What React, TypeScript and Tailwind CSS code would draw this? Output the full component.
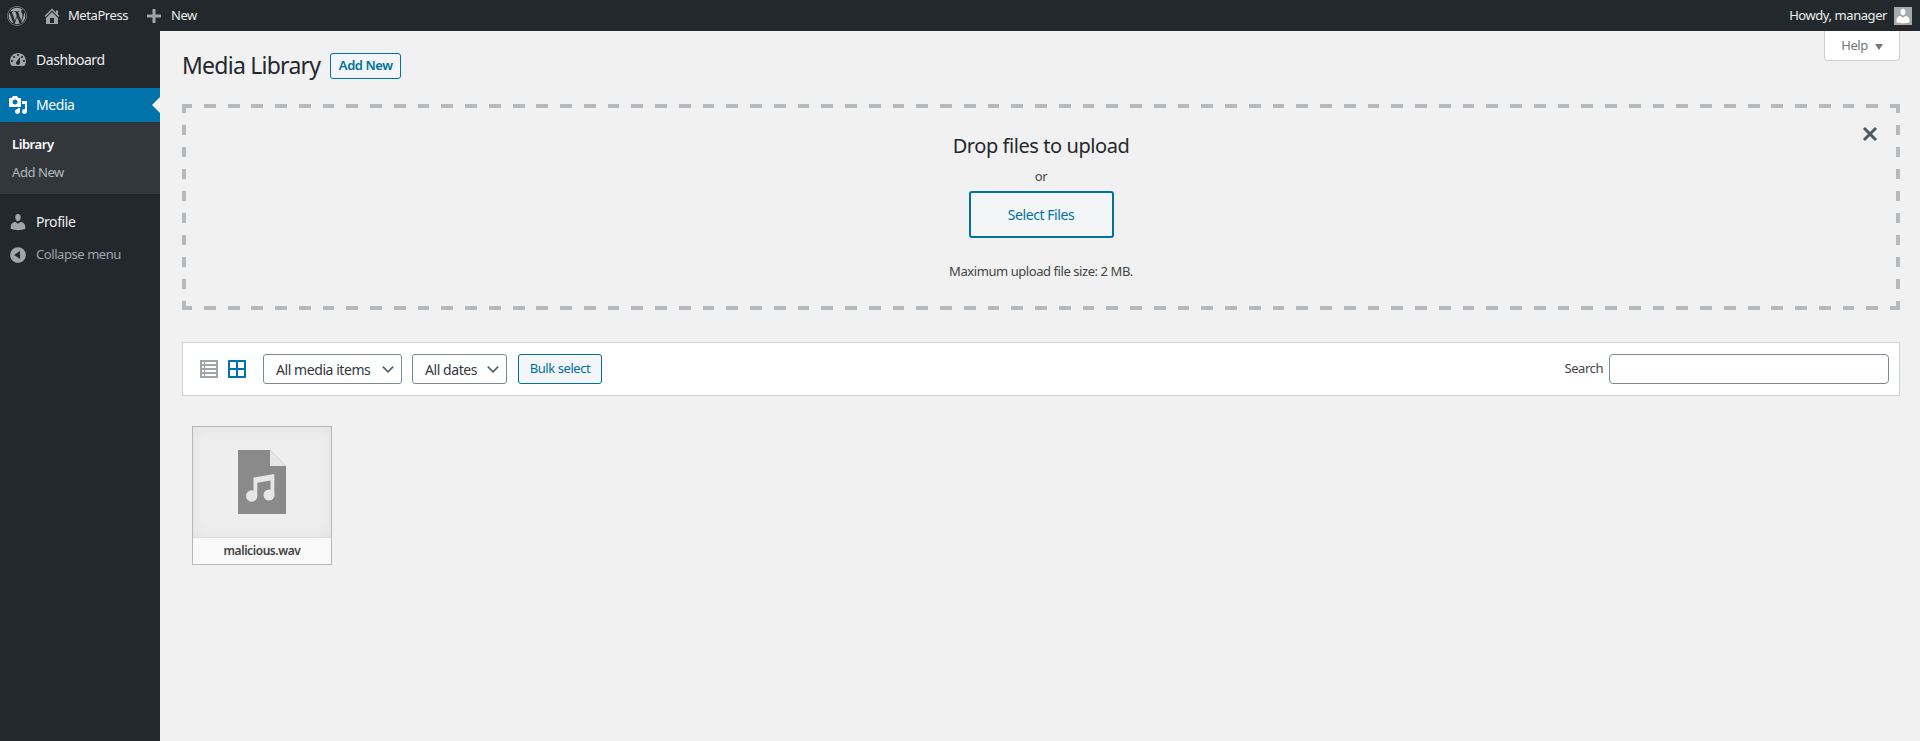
import { ReactNode } from "react";
import { FaWordpress } from "react-icons/fa";

const FONT = "font-['Noto_Sans','Open_Sans',sans-serif] tracking-[-0.027em]";

const Dashicon = ({ d, className }: { d: string; className: string }) => (
  <svg viewBox="0 0 20 20" fill="currentColor" className={className}>
    <path d={d} fillRule="evenodd" />
  </svg>
);

const ICONS = {
  home: "M16 8.5l1.53 1.53-1.06 1.06L10 4.62l-6.47 6.47-1.06-1.06L10 2.5l4 4v-2h2v4zm-6-2.46l6 5.99V18H4v-5.97zM12 17v-5H8v5h4z",
  plus: "M17 8.5v3h-5.5V17h-3v-5.5H3v-3h5.5V3h3v5.5z",
  dashboard:
    "M3.76 16h12.48c1.1-1.37 1.76-3.11 1.76-5 0-4.42-3.58-8-8-8s-8 3.58-8 8c0 1.89.66 3.63 1.76 5zM10 4c.55 0 1 .45 1 1s-.45 1-1 1-1-.45-1-1 .45-1 1-1zM6 6c.55 0 1 .45 1 1s-.45 1-1 1-1-.45-1-1 .45-1 1-1zm8 0c.55 0 1 .45 1 1s-.45 1-1 1-1-.45-1-1 .45-1 1-1zm-5.37 5.55L12 7v6c0 1.1-.9 2-2 2s-2-.9-2-2c0-.57.24-1.08.63-1.45zM4 10c.55 0 1 .45 1 1s-.45 1-1 1-1-.45-1-1 .45-1 1-1zm12 0c.55 0 1 .45 1 1s-.45 1-1 1-1-.45-1-1 .45-1 1-1z",
  media:
    "M13 11V4c0-.55-.45-1-1-1h-1.67L9 1H5L3.67 3H2c-.55 0-1 .45-1 1v7c0 .55.45 1 1 1h10c.55 0 1-.45 1-1zM7 4.5c1.38 0 2.5 1.12 2.5 2.5S8.38 9.5 7 9.5 4.5 8.38 4.5 7 5.62 4.5 7 4.5zM14 6h5v10.5c0 1.38-1.12 2.5-2.5 2.5S14 17.88 14 16.5s1.12-2.5 2.5-2.5c.17 0 .34.02.5.05V9h-3V6zm-4 8.05V13h2v3.5c0 1.38-1.12 2.5-2.5 2.5S7 17.88 7 16.5 8.12 14 9.5 14c.17 0 .34.02.5.05z",
  profile:
    "M10 9.25c-2.27 0-2.73-3.44-2.73-3.44C7 4.02 7.82 2 9.97 2c2.16 0 2.98 2.02 2.71 3.81 0 0-.41 3.44-2.68 3.44zm0 2.57L12.72 10c2.39 0 4.52 2.33 4.52 4.53v2.49s-3.65 1.13-7.24 1.13c-3.65 0-7.24-1.13-7.24-1.13v-2.49c0-2.25 1.94-4.48 4.47-4.48z",
  collapse:
    "M10 2.16c4.33 0 7.84 3.51 7.84 7.84s-3.51 7.84-7.84 7.84S2.16 14.33 2.16 10 5.71 2.16 10 2.16zm2 11.72V6.12L6.18 9.97z",
  grid: "M2 1h16c.55 0 1 .45 1 1v16c0 .55-.45 1-1 1H2c-.55 0-1-.45-1-1V2c0-.55.45-1 1-1zm7.01 7.99v-6H3v6h6.01zm8 0v-6h-6v6h6zm-8 8.01v-6H3v6h6.01zm8 0v-6h-6v6h6z",
  list: "M1 1h18v18H1zM3 3v2h2V3zm3 0v2h11V3zM3 7v2h2V7zm3 0v2h11V7zM3 11v2h2v-2zm3 0v2h11v-2zM3 15v2h2v-2zm3 0v2h11v-2z",
};

const MenuItem = ({ icon, children }: { icon: string; children: ReactNode }) => (
  <a className="flex h-[34px] items-center text-[14px] text-[#eeeeee]">
    <span className="flex w-[36px] justify-center text-[#a0a5aa]">
      <Dashicon d={icon} className="h-5 w-5" />
    </span>
    <span className="pb-[2px]">{children}</span>
  </a>
);

const Select = ({ label, className }: { label: string; className: string }) => (
  <div
    className={`flex h-[30px] items-center justify-between whitespace-nowrap rounded-[3px] border border-[#7e8993] bg-white pl-[12px] pr-[5px] text-[14px] text-[#32373c] ${className}`}
  >
    {label}
    <svg viewBox="0 0 20 20" className="h-4 w-4" fill="none" stroke="#555d66" strokeWidth="2">
      <path d="M3.5 7l6.5 6.5L16.5 7" />
    </svg>
  </div>
);

export default function App() {
  return (
    <div className={`flex min-h-screen flex-col bg-[#f1f1f1] ${FONT}`}>
      <header className="flex h-[31px] items-center justify-between bg-[#23282d] text-[13px] text-[#eeeeee]">
        <div className="flex items-center">
          <FaWordpress className="ml-[7px] h-[20px] w-[20px] text-[#a0a5aa]" />
          <Dashicon d={ICONS.home} className="ml-[15px] h-5 w-5 text-[#a0a5aa]" />
          <span className="ml-[6px]">MetaPress</span>
          <Dashicon d={ICONS.plus} className="ml-[16px] h-5 w-5 text-[#a0a5aa]" />
          <span className="ml-[7px]">New</span>
        </div>
        <div className="mr-[8px] flex items-center gap-[7px]">
          <span>Howdy, manager</span>
          <span className="flex h-[18px] w-[18px] items-end justify-center overflow-hidden bg-[#a7aaad]">
            <Dashicon d={ICONS.profile} className="h-[18px] w-[18px] text-white" />
          </span>
        </div>
      </header>

      <div className="flex flex-1">
        <aside className="w-[160px] shrink-0 bg-[#23282d] pt-[12px]">
          <MenuItem icon={ICONS.dashboard}>Dashboard</MenuItem>
          <div className="relative mt-[11px] flex h-[34px] items-center bg-[#0073aa] text-[14px] text-white">
            <span className="flex w-[36px] justify-center">
              <Dashicon d={ICONS.media} className="h-5 w-5" />
            </span>
            <span className="pb-[2px]">Media</span>
            <span className="absolute right-0 top-[9px] border-y-[8px] border-r-[8px] border-y-transparent border-r-[#f1f1f1]" />
          </div>
          <div className="flex h-[72px] flex-col justify-center gap-[10px] bg-[#32373c] pl-[12px] text-[13px]">
            <span className="font-semibold leading-[18px] text-white">Library</span>
            <span className="leading-[18px] text-[#b4b9be]">Add New</span>
          </div>
          <div className="mt-[11px]">
            <MenuItem icon={ICONS.profile}>Profile</MenuItem>
          </div>
          <div className="flex h-[32px] items-center text-[13px] text-[#a0a5aa]">
            <span className="flex w-[36px] justify-center">
              <Dashicon d={ICONS.collapse} className="h-5 w-5" />
            </span>
            Collapse menu
          </div>
        </aside>

        <main className="relative flex-1 pl-[22px] pr-[20px]">
          <div className="absolute right-[20px] top-0 flex h-[30px] w-[76px] items-center justify-center gap-[7px] rounded-b-[4px] border border-t-0 border-[#ccd0d4] bg-white pt-[1px] text-[13px] text-[#72777c]">
            Help
            <span className="mt-[1px] border-x-[4.5px] border-t-[6px] border-x-transparent border-t-[#72777c]" />
          </div>

          <div className="flex h-[73px] items-start pt-[20px]">
            <h1 className="text-[23px] leading-[29px] tracking-[-0.033em] text-[#23282d]">Media Library</h1>
            <button className="ml-[10px] mt-[2px] h-[26px] w-[71px] rounded-[3px] border border-[#0071a1] bg-[#f3f5f6] text-[13px] font-semibold text-[#0071a1]">
              Add New
            </button>
          </div>

          <section className="relative flex h-[206px] flex-col items-center pt-[28px] [background:repeating-linear-gradient(90deg,#b4b9be_-1.75px,#b4b9be_10px,transparent_10px,transparent_22px)_top/100%_4px_no-repeat,repeating-linear-gradient(90deg,#b4b9be_-1.75px,#b4b9be_10px,transparent_10px,transparent_22px)_bottom/100%_4px_no-repeat,repeating-linear-gradient(180deg,#b4b9be_-0.5px,#b4b9be_9.5px,transparent_9.5px,transparent_21.5px)_left/4px_100%_no-repeat,repeating-linear-gradient(180deg,#b4b9be_-0.5px,#b4b9be_9.5px,transparent_9.5px,transparent_21.5px)_right/4px_100%_no-repeat]">
            <svg viewBox="0 0 20 20" className="absolute right-[20px] top-[20px] h-[20px] w-[20px]" stroke="#50575e" strokeWidth="3" fill="none">
              <path d="M4 4l12 12M16 4L4 16" />
            </svg>
            <h2 className="text-[20px] leading-[28px] text-[#23282d]">Drop files to upload</h2>
            <p className="mt-[7px] text-[13px] leading-[18px] text-[#444444]">or</p>
            <button className="mt-[6px] h-[47px] w-[145px] rounded-[3px] border-2 border-[#0071a1] bg-[#f3f5f6] text-[14px] text-[#0071a1]">
              Select Files
            </button>
            <p className="mt-[24px] text-[13px] leading-[18px] text-[#444444]">Maximum upload file size: 2 MB.</p>
          </section>

          <section className="mt-[32px] flex h-[54px] items-center justify-between border border-[#ccd0d4] bg-white pl-[16px] pr-[10px]">
            <div className="flex items-center">
              <Dashicon d={ICONS.list} className="h-[20px] w-[20px] text-[#a0a5aa]" />
              <Dashicon d={ICONS.grid} className="ml-[8px] h-[20px] w-[20px] text-[#0073aa]" />
              <Select label="All media items" className="ml-[16px] w-[139px]" />
              <Select label="All dates" className="ml-[10px] w-[95px]" />
              <button className="ml-[11px] h-[30px] w-[84px] rounded-[3px] border border-[#0071a1] bg-[#f3f5f6] text-[13px] text-[#0071a1]">
                Bulk select
              </button>
            </div>
            <div className="flex items-center gap-[6px] text-[13px] text-[#444444]">
              Search
              <input className="h-[30px] w-[280px] rounded-[4px] border border-[#7e8993] bg-white" />
            </div>
          </section>

          <section className="ml-[10px] mt-[30px] flex w-[140px] flex-col border border-[#b4b9be] bg-white">
            <div className="flex h-[110px] items-center justify-center bg-[#eeeeee] shadow-[inset_0_0_15px_rgba(0,0,0,0.06)]">
              <svg viewBox="0 0 48 64" className="h-[64px] w-[48px]">
                <path d="M0 0h32l16 16v48H0z" fill="#8a8a8a" />
                <path d="M32 0l16 16H32z" fill="#e6e6e6" />
                <g fill="#e6e6e6">
                  <circle cx="13.7" cy="46" r="5.7" />
                  <circle cx="31" cy="45" r="5.5" />
                  <path d="M15.5 27.5L36.3 24v21h-3.8V30.5l-13.2 2.3V46h-3.8z" />
                </g>
              </svg>
            </div>
            <div className="flex h-[27px] items-center justify-center border-t border-[#dddddd] bg-[#f9f9f9] text-[12px] font-semibold text-[#444444]">
              malicious.wav
            </div>
          </section>
        </main>
      </div>
    </div>
  );
}
